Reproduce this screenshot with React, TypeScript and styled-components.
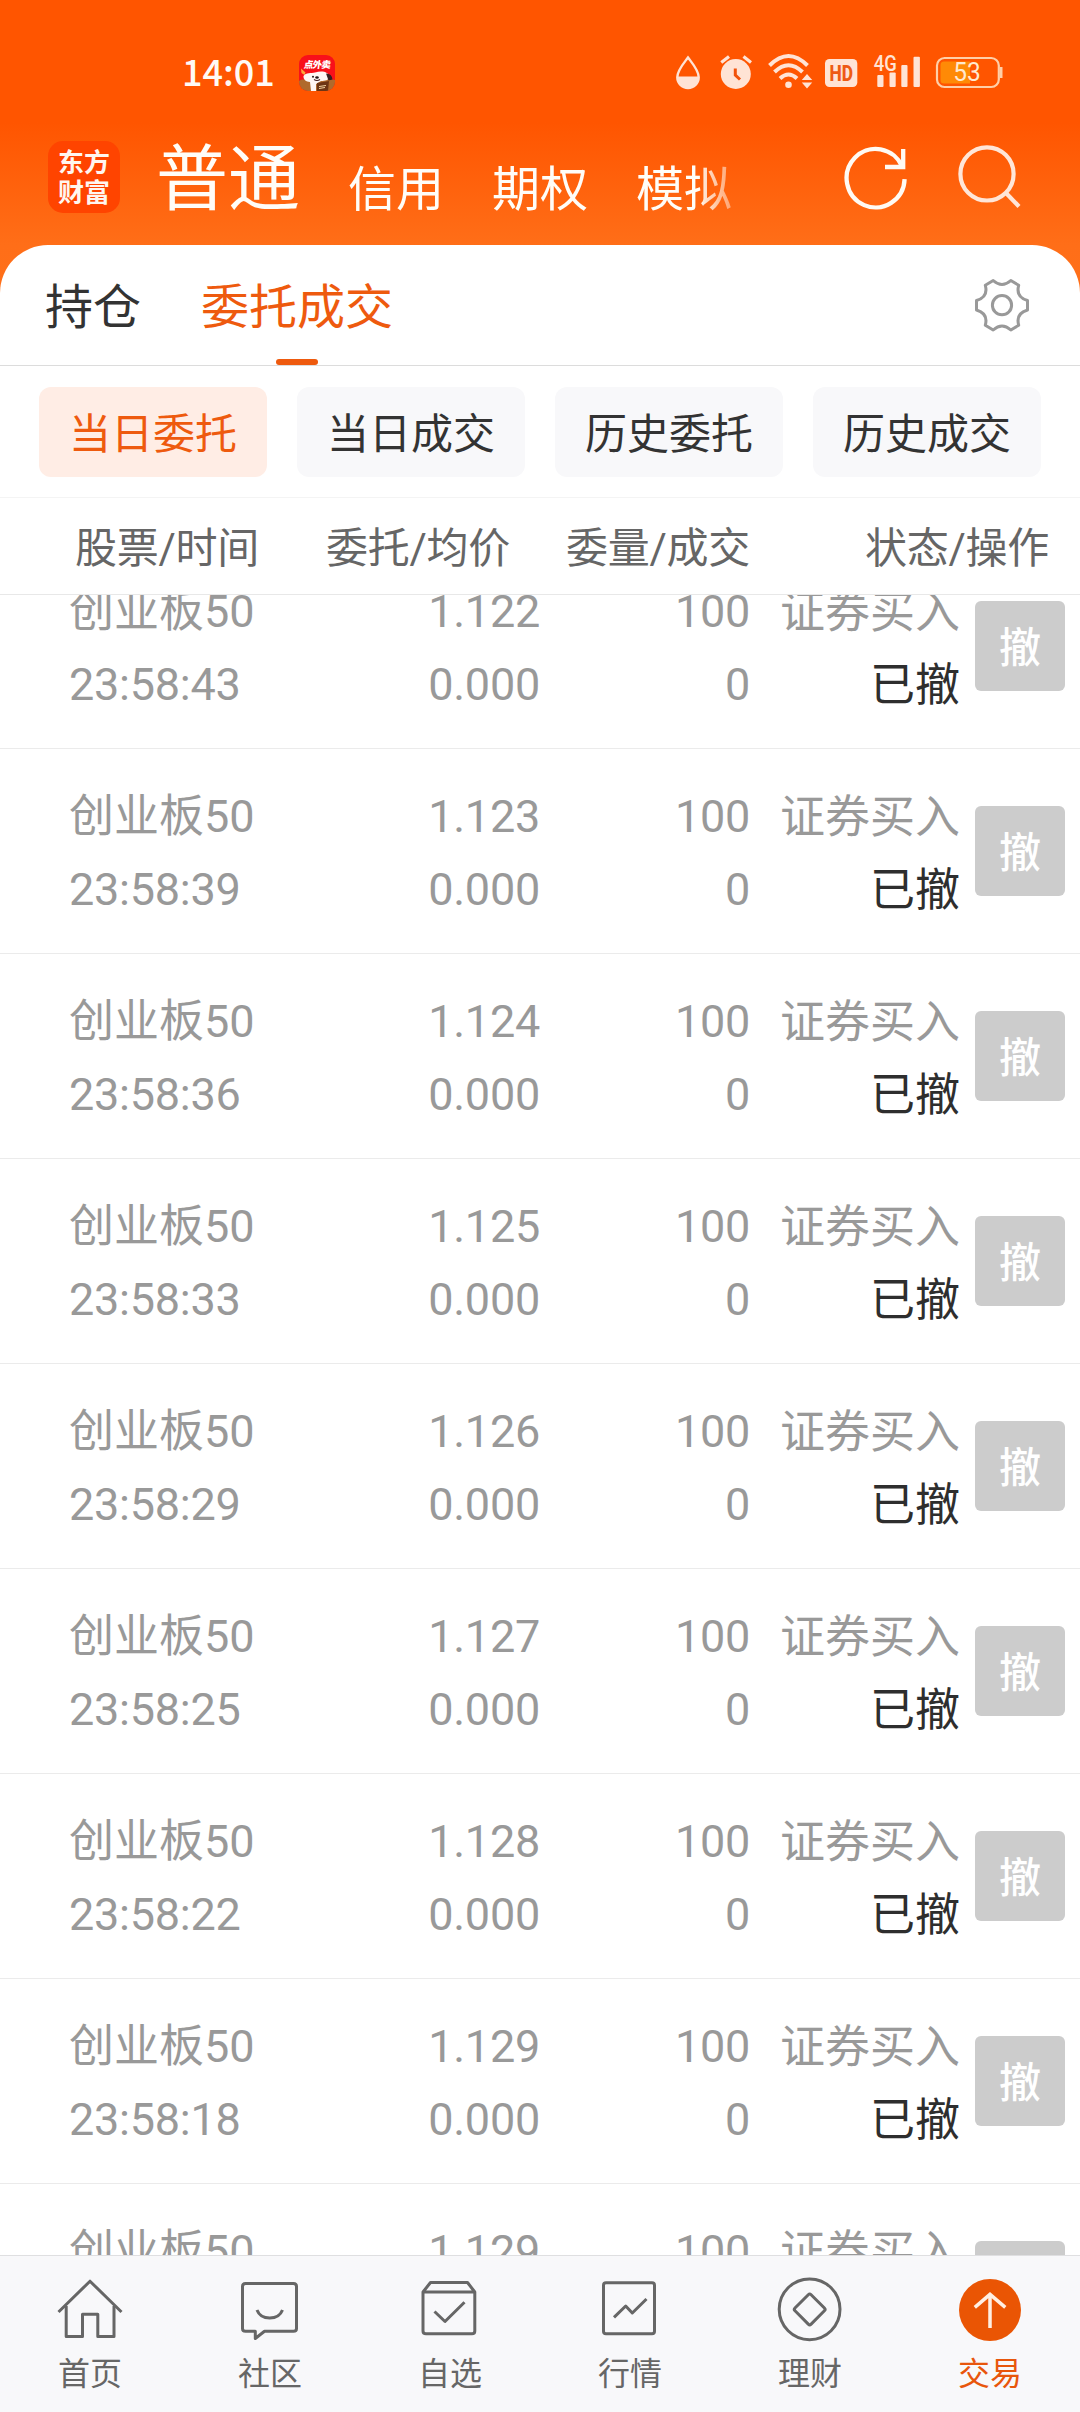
import React from 'react';
import styled, { createGlobalStyle } from 'styled-components';

const ACCENT = '#ee5a0e';
const TINT = '#ffe3d5';

const GlobalStyle = createGlobalStyle`
  * { box-sizing: border-box; }
  body {
    margin: 0;
    font-family: Roboto, 'Noto Sans CJK SC', sans-serif;
    background: #fff;
  }
`;

const Screen = styled.div`
  width: 1080px;
  height: 2412px;
  display: flex;
  flex-direction: column;
  overflow: hidden;
  background: linear-gradient(180deg, #ff5500 0, #ff5500 122px, #ff6e18 245px, #ff7019 300px);
`;

const StatusBar = styled.div`
  height: 112px;
  flex: none;
  display: flex;
  align-items: flex-start;
  justify-content: space-between;
  padding: 50px 76px 0 182px;
`;

const StatusLeft = styled.div`
  display: flex;
  align-items: center;
  gap: 25px;
  height: 46px;
`;

const Clock = styled.span`
  font: 500 36px/46px 'Noto Sans CJK SC', sans-serif;
  color: #fffaf5;
  width: 92px;
  height: 52px;
`;

const StatusIcons = styled.div`
  display: flex;
  height: 46px;
`;

const Header = styled.header`
  height: 133px;
  flex: none;
  display: flex;
  align-items: flex-start;
  padding: 29px 57px 0 48px;
`;

const Logo = styled.div`
  display: flex;
  flex-direction: column;
  width: 72px;
  height: 72px;
  border-radius: 15px;
  background: #ff4400;
  color: #fff6f0;
  font: 700 26px/30px Roboto, 'Noto Sans CJK SC', sans-serif;
  text-align: center;
  padding-top: 7px;
`;

const Accounts = styled.nav`
  display: flex;
  align-items: flex-end;
  gap: 48px;
  height: 75px;
  margin-left: 36px;
  mask-image: linear-gradient(90deg, #000 545px, rgba(0, 0, 0, 0.85) 548px, rgba(0, 0, 0, 0.4) 576px);
`;

const Account = styled.span<{ $large?: boolean }>`
  font-size: ${(p) => (p.$large ? 72 : 48)}px;
  line-height: ${(p) => (p.$large ? 72 : 52)}px;
  color: #fffdf8;
  white-space: nowrap;
`;

const HeaderActions = styled.div`
  display: flex;
  gap: 48px;
  margin-left: auto;
`;

const Panel = styled.main`
  flex: 1;
  min-height: 0;
  display: flex;
  flex-direction: column;
  background: #fff;
  border-radius: 48px 48px 0 0;
`;

const Tabs = styled.div`
  height: 121px;
  flex: none;
  display: flex;
  gap: 60px;
  padding: 0 48px 0 45px;
  border-bottom: 1px solid #dcdcdc;
`;

const Tab = styled.div<{ $active?: boolean }>`
  display: flex;
  flex-direction: column;
  align-items: center;
  justify-content: space-between;
  padding-top: 33px;
  font-size: 48px;
  line-height: 60px;
  color: ${(p) => (p.$active ? ACCENT : '#333')};
  &::after {
    content: '';
    width: 42px;
    height: 6px;
    border-radius: 3px;
    background: ${(p) => (p.$active ? ACCENT : 'transparent')};
  }
`;

const SettingsButton = styled.div`
  margin: 30px 0 0 auto;
  width: 60px;
  height: 60px;
`;

const Filters = styled.div`
  height: 132px;
  flex: none;
  display: grid;
  grid-template-columns: repeat(4, 1fr);
  gap: 30px;
  padding: 21px 39px 20px;
  border-bottom: 1px solid #f4f4f4;
`;

const Filter = styled.div<{ $active?: boolean }>`
  display: flex;
  justify-content: center;
  border-radius: 12px;
  font-size: 42px;
  line-height: 96px;
  height: 90px;
  color: ${(p) => (p.$active ? ACCENT : '#333')};
  background: ${(p) => (p.$active ? '#ffede5' : '#f8f8fa')};
`;

const TableHead = styled.div`
  height: 97px;
  flex: none;
  display: grid;
  grid-template-columns: 259px 251px 240px 299px;
  border-bottom: 1px solid #e8e8e8;
  font-size: 42px;
  letter-spacing: -0.25px;
  line-height: 101px;
  color: #666;
  text-align: right;
`;

const List = styled.div`
  flex: 1;
  min-height: 0;
  overflow: hidden;
`;

const Row = styled.div<{ $scrolled?: boolean }>`
  height: 205px;
  display: grid;
  grid-template-columns: 231px 240px 210px 210px 90px;
  padding: 31px 0 0 69px;
  margin-top: ${(p) => (p.$scrolled ? -51 : 0)}px;
  border-bottom: 1px solid #ebebeb;
`;

const Cell = styled.div<{ $align?: string }>`
  font-size: 45px;
  line-height: 73px;
  color: #999;
  text-align: ${(p) => p.$align || 'right'};
  white-space: nowrap;
`;

const Digits = styled.div`
  letter-spacing: -0.25px;
`;

/* Chinese glyphs sit one pixel lower than the digits beside them. */
const Kind = styled.div`
  padding-top: 1px;
  height: 73px;
`;

const Status = styled(Kind)`
  color: #2e2e2e;
`;

const CancelButton = styled.div`
  width: 90px;
  height: 90px;
  margin: 26px 0 0 15px;
  border-radius: 6px;
  background: #ccc;
  color: #fff;
  font-size: 42px;
  font-weight: 500;
  line-height: 96px;
  text-align: center;
`;

const BottomNav = styled.nav`
  height: 157px;
  flex: none;
  display: grid;
  grid-template-columns: repeat(6, 1fr);
  background: #f8f8fa;
  border-top: 1px solid #dfdfe1;
`;

const NavItem = styled.div<{ $active?: boolean }>`
  display: flex;
  flex-direction: column;
  align-items: center;
  gap: 10px;
  padding-top: 21px;
  font-size: 32px;
  line-height: 42px;
  color: ${(p) => (p.$active ? '#e8560c' : '#666')};
`;

const NavSvg = styled.svg`
  width: 66px;
  height: 66px;
  fill: none;
  stroke: #666;
  stroke-width: 3;
  stroke-linejoin: round;
`;

const AppBadge = () => (
  <svg width="36" height="36" viewBox="0 0 36 36">
    <defs>
      <clipPath id="badge"><rect width="36" height="36" rx="9" /></clipPath>
    </defs>
    <g clipPath="url(#badge)">
      <rect width="36" height="36" fill="#f8101a" />
      <path d="M0 26C6 22 9 28 18 25S30 24 36 25V36H0Z" fill="#b06a2c" />
      <path d="M2 13.500l4.500 4-1 2.500-3-2z" fill="#ffa53c" />
      <path d="M4.500 21C7 17 12 18.500 16 17.500C23 15 30 17 30.500 22C30 25 26 26 22 26L17 29V36H12L11 27C7 27 4 24 4.500 21Z" fill="#fff7f4" />
      <path d="M27 18.500q6 0 6.500 6l-4 1z" fill="#3a2020" />
      <path d="M15 24.500q3 2 6 0" stroke="#442020" strokeWidth="1.2" fill="none" />
      <circle cx="14" cy="21.800" r="1" fill="#221515" />
      <ellipse cx="18" cy="22.500" rx="1.800" ry="1.200" fill="#221515" />
      <path d="M18 28l12-2-1 10H18z" fill="#6d3514" />
      <path d="M20 31.500l7-1M20 33.500l6-1" stroke="#f3d4a0" strokeWidth="1" />
      <text x="5" y="13.500" fontSize="9.5" fontWeight="900" fill="#fff" fontFamily="'Noto Sans CJK SC', sans-serif" textLength="27" transform="skewX(-8) translate(1.5 0)">点外卖</text>
    </g>
  </svg>
);

/* Indicators share one strip: humidity drop, alarm, wifi, HD, cellular, battery. */
const DropIcon = () => (
  <svg width="44" height="46" viewBox="672 50 44 46">
    <path d="M688 57.5C684 63 677.3 70 677.3 77.3a10.7 10.7 0 0 0 21.4 0C698.700 70 692 63 688 57.500Z" fill="none" stroke={TINT} strokeWidth="2.4" />
    <path d="M677 76.500H699a11 11.500 0 0 1-22 0Z" fill={TINT} />
  </svg>
);
const AlarmIcon = () => (
  <svg width="50" height="46" viewBox="716 50 50 46">
    <circle cx="735.8" cy="74" r="15" fill={TINT} />
    <path d="M721.3 62.500L729 56.500M743.500 56.500L751 62.500" stroke={TINT} strokeWidth="3.2" />
    <path d="M735.300 68.500V75L740 79.500" fill="none" stroke="#f2520a" strokeWidth="3" />
  </svg>
);
const WifiIcon = () => (
  <svg width="56" height="46" viewBox="766 50 56 46">
    <g fill="none" stroke={TINT} strokeWidth="4">
      <path d="M769.500 65.500Q788.500 46.500 807.500 65.500" />
      <path d="M774.500 72Q788.500 58.500 802.500 72" />
      <path d="M780 78.500Q788.500 70.500 797 78.500" />
    </g>
    <circle cx="788.500" cy="84.800" r="3.300" fill={TINT} />
    <path d="M801.800 80L807 74L812.200 80ZM801.800 82.600H812.200L807 88.500Z" fill={TINT} />
  </svg>
);
const HdIcon = () => (
  <svg width="50" height="46" viewBox="822 50 50 46">
    <rect x="825" y="59" width="32.300" height="28" rx="4.500" fill={TINT} />
    <text x="829.500" y="81" fontSize="22" fontWeight="800" fill="#ee5a14" textLength="23.500" lengthAdjust="spacingAndGlyphs" fontFamily="Roboto, sans-serif">HD</text>
  </svg>
);
const SignalIcon = () => (
  <svg width="60" height="46" viewBox="872 50 60 46">
    <text x="873.800" y="70.500" fontSize="21.500" fontWeight="500" fill={TINT} textLength="23" lengthAdjust="spacingAndGlyphs" fontFamily="Roboto, sans-serif">4G</text>
    <g fill={TINT}>
      <rect x="877.300" y="75" width="6.200" height="12" rx="1" />
      <rect x="889.500" y="72.500" width="6.200" height="14.500" rx="1" />
      <rect x="901.300" y="65" width="6.200" height="22" rx="1" />
      <rect x="913.500" y="56.800" width="6.400" height="30.200" rx="1" />
    </g>
  </svg>
);
const BatteryIcon = () => (
  <svg width="72" height="46" viewBox="932 50 72 46">
    <path d="M944 61.500H970V83.500H944Q940.500 83.500 940.500 80V65Q940.500 61.500 944 61.500Z" fill="#ff8a06" />
    <rect x="937" y="58" width="61.800" height="29" rx="7.500" fill="none" stroke="#ffcfa8" strokeWidth="2.200" />
    <path d="M1001.200 67V78" stroke="#ffcfa8" strokeWidth="2.600" />
    <text x="953.300" y="81.300" fontSize="25" fill="#ffe9cf" textLength="27.500" lengthAdjust="spacingAndGlyphs" fontFamily="Roboto, sans-serif">53</text>
  </svg>
);

const RefreshIcon = () => (
  <svg width="66" height="72" viewBox="843 141 66 72" fill="none" stroke="#fffaf3" strokeWidth="4.300">
    <path d="M904.600 179.200A29 29.300 0 1 1 902 166" />
    <path d="M885 167H903.200V149" />
  </svg>
);
const SearchIcon = () => (
  <svg width="66" height="72" viewBox="957 141 66 72" fill="none" stroke="#ffe6d8" strokeWidth="4.200">
    <circle cx="987" cy="173.900" r="26.600" />
    <path d="M1005.500 192.500L1019 206.500" />
  </svg>
);
const GearIcon = () => (
  <svg width="60" height="60" viewBox="0 0 60 60" fill="none" stroke="#999" strokeWidth="3" strokeLinejoin="round">
    <path d="M21.200 5.500Q30 13.500 38.800 5.500L46.700 10.300Q43.500 22 55.500 25.500V35Q43.500 38.500 46.700 50.200L38.800 55Q30 47 21.200 55L13.300 50.200Q16.500 38.500 4.500 35V25.500Q16.500 22 13.300 10.300Z" />
    <circle cx="30" cy="30.200" r="9.600" />
  </svg>
);

const HomeIcon = () => (
  <NavSvg viewBox="0 0 66 66">
    <path d="M1.500 35L33 4.200L64.500 35" />
    <path d="M9.200 29V59.500H25.500V37.300H40.800V59.500H57V29" />
  </NavSvg>
);
const CommunityIcon = () => (
  <NavSvg viewBox="0 0 66 66">
    <path d="M8.500 6.500H56.500Q59.500 6.500 59.500 9.500V51.500Q59.500 54.300 56.500 54.300H27.500L18.300 61.500V54.300H8.500Q5.500 54.300 5.500 51.500V9.500Q5.500 6.500 8.500 6.500Z" />
    <path d="M20 33Q23 41 32.700 41Q42.400 41 45.500 33" />
  </NavSvg>
);
const WatchlistIcon = () => (
  <NavSvg viewBox="0 0 66 66">
    <path d="M6 15V54Q6 56.800 9 56.800H55Q57.800 56.800 57.800 54V15L50.500 5.500H13.500ZM6 15H57.800" />
    <path d="M17.500 34.500L28 44.500L47.500 25.300" />
  </NavSvg>
);
const MarketIcon = () => (
  <NavSvg viewBox="0 0 66 66">
    <rect x="6.500" y="5.700" width="51" height="51" rx="2.500" />
    <path d="M17 40.300L28.700 29L35.300 36L49.500 22" />
  </NavSvg>
);
const WealthIcon = () => (
  <NavSvg viewBox="0 0 66 66">
    <circle cx="32.600" cy="32.300" r="30.400" />
    <rect x="21.300" y="21" width="22.800" height="22.800" rx="2" transform="rotate(45 32.700 32.400)" />
  </NavSvg>
);
const TradeIcon = () => (
  <NavSvg viewBox="0 0 66 66">
    <circle cx="33" cy="33" r="31" fill="#ea5504" stroke="none" />
    <path d="M33 51V18M17.800 30.300L33 17.300L48.300 30.300" stroke="#ffefe2" strokeWidth="3.500" strokeLinejoin="miter" />
  </NavSvg>
);

const orders = [
  ['23:58:43', '1.122'],
  ['23:58:39', '1.123'],
  ['23:58:36', '1.124'],
  ['23:58:33', '1.125'],
  ['23:58:29', '1.126'],
  ['23:58:25', '1.127'],
  ['23:58:22', '1.128'],
  ['23:58:18', '1.129'],
  ['', '1.129'],
];

const navItems = [
  { label: '首页', Icon: HomeIcon },
  { label: '社区', Icon: CommunityIcon },
  { label: '自选', Icon: WatchlistIcon },
  { label: '行情', Icon: MarketIcon },
  { label: '理财', Icon: WealthIcon },
  { label: '交易', Icon: TradeIcon, active: true },
];

export default function App() {
  return (
    <>
      <GlobalStyle />
      <Screen>
        <StatusBar>
          <StatusLeft>
            <Clock>14:01</Clock>
            <AppBadge />
          </StatusLeft>
          <StatusIcons>
            <DropIcon />
            <AlarmIcon />
            <WifiIcon />
            <HdIcon />
            <SignalIcon />
            <BatteryIcon />
          </StatusIcons>
        </StatusBar>
        <Header>
          <Logo>
            <span>东方</span>
            <span>财富</span>
          </Logo>
          <Accounts>
            <Account $large>普通</Account>
            <Account>信用</Account>
            <Account>期权</Account>
            <Account>模拟</Account>
          </Accounts>
          <HeaderActions>
            <RefreshIcon />
            <SearchIcon />
          </HeaderActions>
        </Header>
        <Panel>
          <Tabs>
            <Tab>持仓</Tab>
            <Tab $active>委托成交</Tab>
            <SettingsButton><GearIcon /></SettingsButton>
          </Tabs>
          <Filters>
            <Filter $active>当日委托</Filter>
            <Filter>当日成交</Filter>
            <Filter>历史委托</Filter>
            <Filter>历史成交</Filter>
          </Filters>
          <TableHead>
            <span>股票/时间</span>
            <span>委托/均价</span>
            <span>委量/成交</span>
            <span>状态/操作</span>
          </TableHead>
          <List>
            {orders.map(([time, price], i) => (
              <Row key={i} $scrolled={i === 0}>
                <Cell $align="left">
                  <div>创业板50</div>
                  <Digits>{time}</Digits>
                </Cell>
                <Cell>
                  <Digits>{price}</Digits>
                  {time && <Digits>0.000</Digits>}
                </Cell>
                <Cell>
                  <Digits>100</Digits>
                  {time && <Digits>0</Digits>}
                </Cell>
                <Cell>
                  <Kind>证券买入</Kind>
                  {time && <Status>已撤</Status>}
                </Cell>
                <CancelButton>{time && '撤'}</CancelButton>
              </Row>
            ))}
          </List>
          <BottomNav>
            {navItems.map(({ label, Icon, active }) => (
              <NavItem key={label} $active={active}>
                <Icon />
                {label}
              </NavItem>
            ))}
          </BottomNav>
        </Panel>
      </Screen>
    </>
  );
}
